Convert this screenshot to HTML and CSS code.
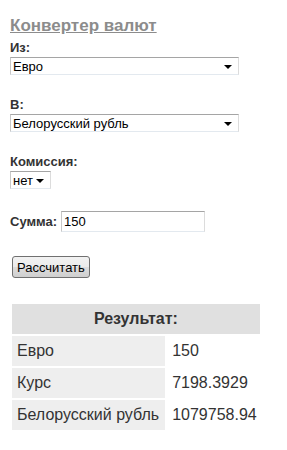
FILE: index.html
```html
<!DOCTYPE html>
<html lang="ru">
<head>
    <meta charset="UTF-8">
    <title>Конвертер валют</title>
    <link rel="stylesheet" href="styles.css">
</head>
<body>

    <h1 class="title">Конвертер валют</h1>

    <form class="converter" action="#" method="GET">
        <div class="field">
            <label class="label" for="from">Из:</label>
            <span class="select-wrap wide">
                <select id="from" name="from">
                    <option selected>Евро</option>
                    <option>Доллар США</option>
                    <option>Белорусский рубль</option>
                </select>
            </span>
        </div>

        <div class="field">
            <label class="label" for="to">В:</label>
            <span class="select-wrap wide">
                <select id="to" name="to">
                    <option>Евро</option>
                    <option>Доллар США</option>
                    <option selected>Белорусский рубль</option>
                </select>
            </span>
        </div>

        <div class="field">
            <label class="label" for="fee">Комиссия:</label>
            <span class="select-wrap small">
                <select id="fee" name="fee">
                    <option selected>нет</option>
                    <option>1%</option>
                    <option>2%</option>
                </select>
            </span>
        </div>

        <div class="field inline">
            <label class="label" for="amount">Сумма:</label>
            <input id="amount" name="amount" type="text" value="150">
        </div>

        <button type="submit" class="calc-btn">Рассчитать</button>
    </form>

    <table class="result">
        <tr>
            <th colspan="2">Результат:</th>
        </tr>
        <tr>
            <td class="name">Евро</td>
            <td class="value">150</td>
        </tr>
        <tr>
            <td class="name">Курс</td>
            <td class="value">7198.3929</td>
        </tr>
        <tr>
            <td class="name">Белорусский рубль</td>
            <td class="value">1079758.94</td>
        </tr>
    </table>

</body>
</html>
```

FILE: styles.css
```css
body {
    margin: 0;
    padding: 16px 10px 10px;
    background: #fff;
    color: #333;
    font-family: "Liberation Sans", Arial, sans-serif;
    font-size: 13px;
}

.title {
    margin: 0 0 4px;
    font-size: 17px;
    font-weight: bold;
    color: #8c8c8c;
    text-decoration: underline;
}

.field {
    margin-bottom: 22px;
}

.label {
    display: block;
    font-weight: bold;
    margin-bottom: 2px;
}

.field.inline {
    display: flex;
    align-items: center;
    gap: 4px;
    margin-bottom: 24px;
}

.field.inline .label {
    margin-bottom: 0;
}

.select-wrap {
    position: relative;
    display: inline-block;
}

.select-wrap.wide {
    width: 229px;
}

.select-wrap.small {
    width: 41px;
}

.select-wrap::after {
    content: "";
    position: absolute;
    right: 7px;
    top: 8px;
    border-left: 4px solid transparent;
    border-right: 4px solid transparent;
    border-top: 4px solid #000;
    pointer-events: none;
}

select {
    appearance: none;
    -webkit-appearance: none;
    width: 100%;
    height: 18px;
    margin: 0;
    padding: 0 0 0 2px;
    border: 1px solid;
    border-color: #a5a5a5 #dcdcdc #e3e9ef #c8c8c8;
    border-radius: 0;
    background: #fff;
    color: #000;
    font-family: "Liberation Sans", Arial, sans-serif;
    font-size: 13px;
}

input[type="text"] {
    width: 138px;
    height: 19px;
    margin: 0;
    padding: 0 2px;
    border: 1px solid;
    border-color: #a5a5a5 #dcdcdc #e3e9ef #c8c8c8;
    color: #000;
    font-family: "Liberation Sans", Arial, sans-serif;
    font-size: 13px;
}

.calc-btn {
    display: block;
    margin: 0 0 24px 2px;
    padding: 0 4px;
    height: 22px;
    border: 1px solid #707070;
    border-radius: 3px;
    background: linear-gradient(#f2f2f2 0%, #ebebeb 50%, #dddddd 51%, #cfcfcf 100%);
    color: #000;
    font-family: "Liberation Sans", Arial, sans-serif;
    font-size: 13px;
}

.result {
    border-spacing: 2px;
    font-size: 16px;
    color: #333;
}

.result th {
    padding: 6px 5px;
    background: #e0e0e0;
    font-weight: bold;
    text-align: center;
}

.result td {
    padding: 6px 5px;
    line-height: 18px;
}

.result td.name {
    background: #eeeeee;
    padding-right: 6px;
}

.result td.value {
    padding-right: 3px;
}
```
